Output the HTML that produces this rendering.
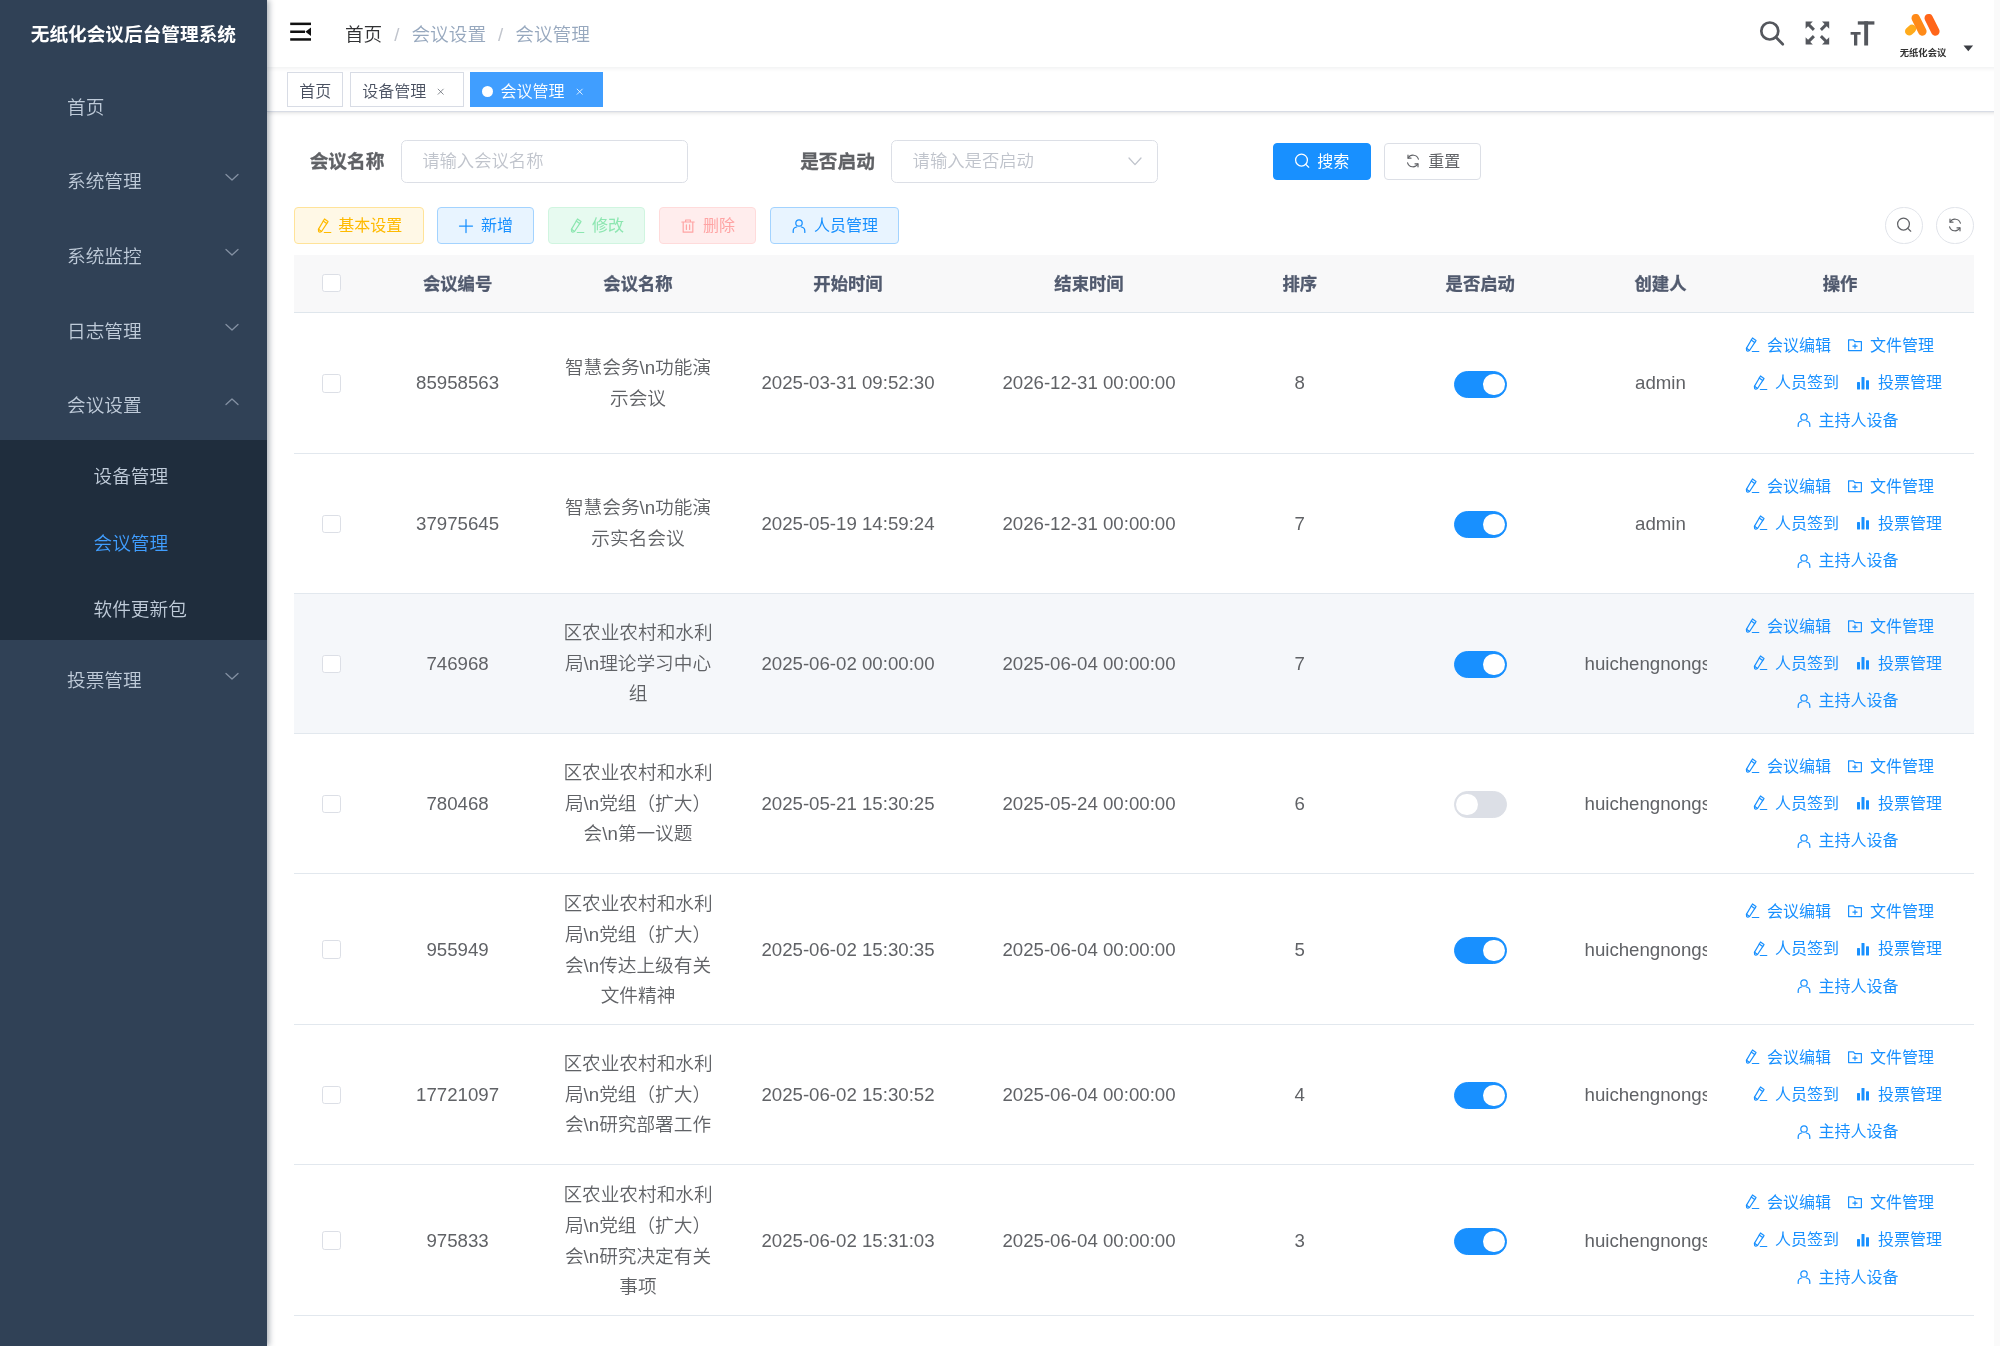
<!DOCTYPE html>
<html lang="zh-CN"><head><meta charset="utf-8"><title>无纸化会议后台管理系统</title>
<style>
*{box-sizing:border-box;margin:0;padding:0}
html,body{width:2000px;height:1346px;overflow:hidden;background:#fff}
body{font-family:"Liberation Sans","Noto Sans CJK SC",sans-serif;font-size:18.67px;color:#606266;position:relative;font-weight:350;-webkit-font-smoothing:antialiased}
svg{display:block;overflow:visible}
.abs{position:absolute}
/* sidebar */
.sidebar{position:absolute;left:0;top:0;width:266.67px;height:1346px;background:#304156;box-shadow:2px 0 6px rgba(0,21,41,.35);z-index:10}
.logo{height:66.67px;line-height:70px;text-align:center;color:#fff;font-weight:700;font-size:18.67px;white-space:nowrap}
.mi{position:relative;height:74.67px;line-height:81px;padding-left:67px;color:#bfcbd9;font-size:18.67px;white-space:nowrap}
.mi svg{position:absolute;left:224px;top:28px}
.sub{background:#1f2d3d}
.sub .si{height:66.67px;line-height:73px;padding-left:93.5px;color:#bfcbd9;font-size:18.67px;white-space:nowrap}
.sub .si.on{color:#409eff}
/* navbar */
.navbar{position:absolute;left:266.67px;top:0;width:1733.33px;height:66.67px;background:#fff;box-shadow:0 1px 5px rgba(0,21,41,.08);z-index:5}
.bc{position:absolute;left:78.3px;top:0;height:66.67px;line-height:69.2px;font-size:18.67px;white-space:nowrap;color:#97a8be}
.bc b{font-weight:350;color:#303133}
.bc i{font-style:normal;color:#c0c4cc;margin:0 12px}
/* tags */
.tags{position:absolute;left:266.67px;top:66.67px;width:1733.33px;height:45.33px;background:#fff;border-bottom:1px solid #d8dce5;box-shadow:0 1px 4px 0 rgba(0,0,0,.12),0 0 3px 0 rgba(0,0,0,.04);z-index:4}
.tag{position:absolute;top:5.33px;height:34.67px;line-height:37.6px;border:1px solid #d8dce5;background:#fff;color:#495060;font-size:16px;padding-left:10.7px;white-space:nowrap}
.tag.on{background:#409eff;border-color:#409eff;color:#fff}
.tag .dot{display:inline-block;width:11px;height:11px;border-radius:50%;background:#fff;margin-right:7.5px;position:relative;top:0.5px}
/* form */
.lbl{-webkit-text-stroke:0.3px #606266;position:absolute;font-weight:700;color:#606266;font-size:18.67px;line-height:43px;height:43px;top:139.5px;white-space:nowrap;text-align:right}
.inp{position:absolute;top:140.2px;height:42.4px;border:1px solid #dcdfe6;border-radius:5.33px;background:#fff;color:#c0c4cc;font-size:17.33px;line-height:40.6px;padding-left:20.2px;white-space:nowrap}
.btn{font-weight:400;position:absolute;height:36.6px;border-radius:4px;font-size:16px;white-space:nowrap;border:1px solid #dcdfe6;background:#fff;color:#606266;display:flex;align-items:center;justify-content:center}
.btn svg{margin-right:6.7px;flex:none}
.btn span{display:block;line-height:20px;position:relative;top:0.7px}
.circ svg{position:relative;top:-0.6px}
.circ{position:absolute;width:37.3px;height:37.3px;border-radius:50%;border:1px solid #e0e3e9;background:#fff;display:flex;align-items:center;justify-content:center}
/* table */
.thead{position:absolute;left:293.5px;top:254.5px;width:1680px;height:58.5px;background:#f8f8f9;border-bottom:1px solid #dfe6ec}
.th{-webkit-text-stroke:0.3px #515a6e;position:absolute;top:0;height:57.5px;line-height:58.5px;text-align:center;font-weight:700;color:#515a6e;font-size:17.33px;white-space:nowrap}
.row{position:absolute;left:293.5px;width:1680px;border-bottom:1px solid #e2e8ee;background:#fff}
.row.hov{background:#f5f7fa}
.td{position:absolute;top:1px;bottom:0;display:flex;align-items:center;justify-content:center;text-align:center;font-size:18.67px;line-height:30.67px;color:#606266;overflow:hidden}
.td .in{white-space:nowrap}
.row.tall .td{top:3px}
.row.tall .sw{top:-0.3px}
.row.tall .cb{top:-1px}
.name{position:relative;top:0;width:153.5px;word-break:break-all;text-align:center}
.cb{width:18.67px;height:18.67px;position:relative;left:1.2px;border:1px solid #dcdfe6;border-radius:2.7px;background:#fff}
.sw{position:relative;top:0.7px;width:53.33px;height:26.67px;border-radius:13.4px;background:#1890ff;border:1px solid #1890ff}
.sw:after{content:"";position:absolute;top:1.67px;left:28.67px;width:21.33px;height:21.33px;border-radius:50%;background:#fff}
.sw.off{background:#dcdfe6;border-color:#dcdfe6}
.sw.off:after{left:1.7px}
.ops{font-weight:400;position:absolute;left:1412.2px;width:266.67px;top:1px;bottom:0;display:flex;flex-direction:column;justify-content:center;align-items:center;color:#1890ff;font-size:16px}
.ol{height:37.4px;display:flex;align-items:center;justify-content:center;white-space:nowrap}
.ob{display:flex;align-items:center;margin-left:16px}
.ob.f{margin-left:0}
.ob svg{margin-right:7px;flex:none;position:relative;top:-0.8px}
.ob span{display:block;line-height:20px}
</style></head>
<body>
<div style="position:absolute;left:0;top:0;width:2000px;height:1346px;will-change:transform">
<div class="sidebar">
<div class="logo">无纸化会议后台管理系统</div>
<div class="mi">首页</div>
<div class="mi">系统管理<svg width="16" height="16" viewBox="0 0 16 16"><path d="M2 5.5 L8 11 L14 5.5" fill="none" stroke="#8491a3" stroke-width="1.3" stroke-linecap="round" stroke-linejoin="round"/></svg></div>
<div class="mi">系统监控<svg width="16" height="16" viewBox="0 0 16 16"><path d="M2 5.5 L8 11 L14 5.5" fill="none" stroke="#8491a3" stroke-width="1.3" stroke-linecap="round" stroke-linejoin="round"/></svg></div>
<div class="mi">日志管理<svg width="16" height="16" viewBox="0 0 16 16"><path d="M2 5.5 L8 11 L14 5.5" fill="none" stroke="#8491a3" stroke-width="1.3" stroke-linecap="round" stroke-linejoin="round"/></svg></div>
<div class="mi">会议设置<svg width="16" height="16" viewBox="0 0 16 16"><path d="M2 11.5 L8 6 L14 11.5" fill="none" stroke="#8491a3" stroke-width="1.3" stroke-linecap="round" stroke-linejoin="round"/></svg></div>
<div class="sub"><div class="si">设备管理</div><div class="si on">会议管理</div><div class="si">软件更新包</div></div>
<div class="mi">投票管理<svg width="16" height="16" viewBox="0 0 16 16"><path d="M2 5.5 L8 11 L14 5.5" fill="none" stroke="#8491a3" stroke-width="1.3" stroke-linecap="round" stroke-linejoin="round"/></svg></div>
</div>
<div class="navbar">
<svg class="abs" style="left:23.33px;top:22.3px" width="22" height="20" viewBox="0 0 22 20"><g fill="#111"><rect x="0.2" y="0.6" width="20.8" height="2.5"/><rect x="0.2" y="8.5" width="14.8" height="2.5"/><rect x="0.2" y="16.2" width="20.8" height="2.5"/><path d="M21 5.4 L21 14 L15.4 9.7 Z"/></g></svg>
<div class="bc"><b>首页</b><i>/</i>会议设置<i>/</i>会议管理</div>
<svg class="abs" style="left:1491.33px;top:19px" width="28" height="28" viewBox="0 0 28 28" fill="none" stroke="#54575d" stroke-width="2.7" stroke-linecap="round"><circle cx="11.8" cy="12" r="8.5"/><path d="M18.2 18.5 L24.8 25.2"/></svg>
<svg class="abs" style="left:1538.13px;top:21.4px" width="25" height="24" viewBox="0 0 25 24" fill="#54575d"><g><path d="M0.6 0.6 H7.8 L0.6 7.8 Z"/><path d="M3.4 3.4 L8.9 8.9" stroke="#54575d" stroke-width="2.9" stroke-linecap="butt" fill="none"/></g><g transform="translate(24.8,0) scale(-1,1)"><path d="M0.6 0.6 H7.8 L0.6 7.8 Z"/><path d="M3.4 3.4 L8.9 8.9" stroke="#54575d" stroke-width="2.9" stroke-linecap="butt" fill="none"/></g><g transform="translate(0,24) scale(1,-1)"><path d="M0.6 0.6 H7.8 L0.6 7.8 Z"/><path d="M3.4 3.4 L8.9 8.9" stroke="#54575d" stroke-width="2.9" stroke-linecap="butt" fill="none"/></g><g transform="translate(24.8,24) scale(-1,-1)"><path d="M0.6 0.6 H7.8 L0.6 7.8 Z"/><path d="M3.4 3.4 L8.9 8.9" stroke="#54575d" stroke-width="2.9" stroke-linecap="butt" fill="none"/></g></svg>
<svg class="abs" style="left:1583.33px;top:21px" width="25" height="25" viewBox="0 0 25 25" fill="#54575d"><rect x="7.8" y="0.3" width="16.6" height="3.3"/><rect x="14.2" y="0.3" width="3.9" height="24.2"/><rect x="0.6" y="11" width="10" height="2.7"/><rect x="4" y="11" width="3.3" height="13.5"/></svg>
<svg class="abs" style="left:1633.33px;top:12px" width="46" height="28" viewBox="0 0 46 28" fill="none" stroke-linecap="round" stroke-width="8.4"><path d="M9.2 19.3 L12 16.8" stroke="#ffab1c"/><path d="M15.7 6.1 L22.4 19.5" stroke="#ff8a18"/><path d="M28.7 6.1 L35.4 19.5" stroke="#ff6519"/></svg>
<div class="abs" style="left:1623.33px;top:46px;width:66px;text-align:center;font-size:9.3px;line-height:14px;font-weight:700;color:#333;white-space:nowrap">无纸化会议</div>
<svg class="abs" style="left:1696.33px;top:44.6px" width="11" height="7" viewBox="0 0 11 7"><path d="M0.5 0.5 H10.1 L5.3 6.2 Z" fill="#3b3e44"/></svg>
</div>
<div class="tags">
<div class="tag" style="left:20.83px;width:55.4px">首页</div>
<div class="tag" style="left:83.83px;width:113.4px">设备管理<span class="abs" style="left:85.7px;top:14.8px"><svg width="7.4" height="7.4" viewBox="0 0 10 10" fill="none" stroke="#6b7079" stroke-width="1.1" stroke-linecap="round"><path d="M1.5 1.5 L8.5 8.5 M8.5 1.5 L1.5 8.5"/></svg></span></div>
<div class="tag on" style="left:203.63px;width:132.3px"><span class="dot"></span>会议管理<span class="abs" style="left:105.2px;top:14.8px"><svg width="7.4" height="7.4" viewBox="0 0 10 10" fill="none" stroke="#fff" stroke-width="1.1" stroke-linecap="round"><path d="M1.5 1.5 L8.5 8.5 M8.5 1.5 L1.5 8.5"/></svg></span></div>
</div>
<div class="lbl" style="left:284.3px;width:100px">会议名称</div>
<div class="inp" style="left:401px;width:286.7px">请输入会议名称</div>
<div class="lbl" style="left:774.8px;width:100px">是否启动</div>
<div class="inp" style="left:891.4px;width:266.7px">请输入是否启动<svg class="abs" style="left:235px;top:12.4px" width="16" height="16" viewBox="0 0 16 16"><path d="M2 4 L8 10.6 L14 4" fill="none" stroke="#c0c4cc" stroke-width="1.3" stroke-linecap="round" stroke-linejoin="round"/></svg></div>
<div class="btn" style="left:1273px;top:143px;width:97.7px;background:#1890ff;border-color:#1890ff;color:#fff"><svg width="16" height="16" viewBox="0 0 16 16" fill="none" stroke="#fff" stroke-width="1.25" stroke-linecap="round"><circle cx="7.5" cy="7.1" r="5.9"/><path d="M11.8 11.4 L14.7 14.2"/></svg><span>搜索</span></div>
<div class="btn" style="left:1384.3px;top:143px;width:97.1px"><svg width="16" height="16" viewBox="0 0 16 16" fill="none" stroke="#606266" stroke-width="1.2" stroke-linecap="round" stroke-linejoin="round"><path d="M13.4 6.2 A5.6 5.6 0 0 0 3.2 5 M2.6 9.8 A5.6 5.6 0 0 0 12.8 11"/><path d="M3 2.2 V5.2 H6 M13 13.8 V10.8 H10"/></svg><span>重置</span></div>
<div class="btn" style="left:294px;top:207.3px;width:129.9px;background:#fff8e6;border-color:#ffe399;color:#ffba00"><svg width="16" height="16" viewBox="0 0 16 16" fill="none" stroke="#ffba00" stroke-width="1.2" stroke-linecap="round" stroke-linejoin="round"><path d="M8.5 1 L12 3.6 L5.5 13.5 Q3.7 14.7 2.7 13.6 L2.4 11.4 Z"/><path d="M7.2 3 L10.7 5.6"/><path d="M2.6 11.2 L5.5 13.4"/><path d="M8.3 14.5 L14.8 14.5"/></svg><span>基本设置</span></div>
<div class="btn" style="left:437.2px;top:207.3px;width:97.1px;background:#e8f4ff;border-color:#a3d3ff;color:#1890ff"><svg width="16" height="16" viewBox="0 0 16 16" fill="none" stroke="#1890ff" stroke-width="1.25" stroke-linecap="round"><path d="M8 1.5 V14.5 M1.5 8 H14.5"/></svg><span>新增</span></div>
<div class="btn" style="left:548.2px;top:207.3px;width:96.9px;background:#e7faf0;border-color:#d0f5e0;color:#8ce6b0"><svg width="16" height="16" viewBox="0 0 16 16" fill="none" stroke="#8ce6b0" stroke-width="1.2" stroke-linecap="round" stroke-linejoin="round"><path d="M8.5 1 L12 3.6 L5.5 13.5 Q3.7 14.7 2.7 13.6 L2.4 11.4 Z"/><path d="M7.2 3 L10.7 5.6"/><path d="M2.6 11.2 L5.5 13.4"/><path d="M8.3 14.5 L14.8 14.5"/></svg><span>修改</span></div>
<div class="btn" style="left:659px;top:207.3px;width:97.3px;background:#ffeded;border-color:#ffdbdb;color:#ffa4a4"><svg width="16" height="16" viewBox="0 0 16 16" fill="none" stroke="#ffa4a4" stroke-width="1.2" stroke-linecap="round" stroke-linejoin="round"><path d="M1.8 4 H14.2 M5.6 4 V2 H10.4 V4 M3.2 4 V14.2 H12.8 V4 M6.4 6.8 V11.4 M9.6 6.8 V11.4"/></svg><span>删除</span></div>
<div class="btn" style="left:770px;top:207.3px;width:129.1px;background:#e8f4ff;border-color:#a3d3ff;color:#1890ff"><svg width="16" height="16" viewBox="0 0 16 16" fill="none" stroke="#1890ff" stroke-width="1.25" stroke-linecap="round" stroke-linejoin="round"><circle cx="8" cy="5" r="3.2"/><path d="M2.2 14.4 V13 C2.2 10.6 4 9.3 5.6 9 M13.8 14.4 V13 C13.8 10.6 12 9.3 10.4 9"/></svg><span>人员管理</span></div>
<div class="circ" style="left:1885.4px;top:206.9px"><svg width="16" height="16" viewBox="0 0 16 16" fill="none" stroke="#606266" stroke-width="1.25" stroke-linecap="round"><circle cx="7.5" cy="7.1" r="5.9"/><path d="M11.8 11.4 L14.7 14.2"/></svg></div>
<div class="circ" style="left:1936.3px;top:206.9px"><svg width="16" height="16" viewBox="0 0 16 16" fill="none" stroke="#606266" stroke-width="1.2" stroke-linecap="round" stroke-linejoin="round"><path d="M13.4 6.2 A5.6 5.6 0 0 0 3.2 5 M2.6 9.8 A5.6 5.6 0 0 0 12.8 11"/><path d="M3 2.2 V5.2 H6 M13 13.8 V10.8 H10"/></svg></div>
<div class="thead"><div class="td" style="left:0;top:0;width:73.7px;height:57px"><div class="cb"></div></div><div class="th" style="left:73.7px;width:180.8px">会议编号</div><div class="th" style="left:254.5px;width:180.0px">会议名称</div><div class="th" style="left:434.5px;width:240.0px">开始时间</div><div class="th" style="left:674.5px;width:242.0px">结束时间</div><div class="th" style="left:916.5px;width:179.5px">排序</div><div class="th" style="left:1096px;width:181.5px">是否启动</div><div class="th" style="left:1277.5px;width:179.0px">创建人</div><div class="th" style="left:1413.2px;width:266.8px;background:#f8f8f9">操作</div></div>
<div class="row" style="top:313px;height:141px"><div class="td" style="left:0px;width:73.7px"><div class="cb"></div></div><div class="td" style="left:73.7px;width:180.8px"><div class="in">85958563</div></div><div class="td" style="left:254.5px;width:180.0px"><div class="name">智慧会务\n功能演示会议</div></div><div class="td" style="left:434.5px;width:240.0px"><div class="in">2025-03-31 09:52:30</div></div><div class="td" style="left:674.5px;width:242.0px"><div class="in">2026-12-31 00:00:00</div></div><div class="td" style="left:916.5px;width:179.5px"><div class="in">8</div></div><div class="td" style="left:1096px;width:181.5px"><div class="sw"></div></div><div class="td" style="left:1277.5px;width:135.70000000000005px"><div class="in" style="position:absolute;left:0;width:179.0px;text-align:center">admin</div></div><div class="ops"><div class="ol"><div class="ob f"><svg width="16" height="16" viewBox="0 0 16 16" fill="none" stroke="#1890ff" stroke-width="1.2" stroke-linecap="round" stroke-linejoin="round"><path d="M8.5 1 L12 3.6 L5.5 13.5 Q3.7 14.7 2.7 13.6 L2.4 11.4 Z"/><path d="M7.2 3 L10.7 5.6"/><path d="M2.6 11.2 L5.5 13.4"/><path d="M8.3 14.5 L14.8 14.5"/></svg><span>会议编辑</span></div><div class="ob"><svg width="16" height="16" viewBox="0 0 16 16" fill="none" stroke="#1890ff" stroke-width="1.2" stroke-linecap="round" stroke-linejoin="round"><path d="M1.6 2.8 H6.4 L7.8 4.6 H14.4 V13.6 H1.6 Z M8 7 V11.2 M5.9 9.1 H10.1"/></svg><span>文件管理</span></div></div><div class="ol"><div class="ob"><svg width="16" height="16" viewBox="0 0 16 16" fill="none" stroke="#1890ff" stroke-width="1.2" stroke-linecap="round" stroke-linejoin="round"><path d="M8.5 1 L12 3.6 L5.5 13.5 Q3.7 14.7 2.7 13.6 L2.4 11.4 Z"/><path d="M7.2 3 L10.7 5.6"/><path d="M2.6 11.2 L5.5 13.4"/><path d="M8.3 14.5 L14.8 14.5"/></svg><span>人员签到</span></div><div class="ob"><svg width="16" height="16" viewBox="0 0 16 16" fill="#1890ff"><rect x="2" y="7" width="3" height="7.5" rx=".6"/><rect x="6.5" y="2" width="3" height="12.5" rx=".6"/><rect x="11" y="5.2" width="3" height="9.3" rx=".6"/></svg><span>投票管理</span></div></div><div class="ol"><div class="ob"><svg width="16" height="16" viewBox="0 0 16 16" fill="none" stroke="#1890ff" stroke-width="1.25" stroke-linecap="round" stroke-linejoin="round"><circle cx="8" cy="5" r="3.2"/><path d="M2.2 14.4 V13 C2.2 10.6 4 9.3 5.6 9 M13.8 14.4 V13 C13.8 10.6 12 9.3 10.4 9"/></svg><span>主持人设备</span></div></div></div></div>
<div class="row" style="top:454px;height:140px"><div class="td" style="left:0px;width:73.7px"><div class="cb"></div></div><div class="td" style="left:73.7px;width:180.8px"><div class="in">37975645</div></div><div class="td" style="left:254.5px;width:180.0px"><div class="name">智慧会务\n功能演示实名会议</div></div><div class="td" style="left:434.5px;width:240.0px"><div class="in">2025-05-19 14:59:24</div></div><div class="td" style="left:674.5px;width:242.0px"><div class="in">2026-12-31 00:00:00</div></div><div class="td" style="left:916.5px;width:179.5px"><div class="in">7</div></div><div class="td" style="left:1096px;width:181.5px"><div class="sw"></div></div><div class="td" style="left:1277.5px;width:135.70000000000005px"><div class="in" style="position:absolute;left:0;width:179.0px;text-align:center">admin</div></div><div class="ops"><div class="ol"><div class="ob f"><svg width="16" height="16" viewBox="0 0 16 16" fill="none" stroke="#1890ff" stroke-width="1.2" stroke-linecap="round" stroke-linejoin="round"><path d="M8.5 1 L12 3.6 L5.5 13.5 Q3.7 14.7 2.7 13.6 L2.4 11.4 Z"/><path d="M7.2 3 L10.7 5.6"/><path d="M2.6 11.2 L5.5 13.4"/><path d="M8.3 14.5 L14.8 14.5"/></svg><span>会议编辑</span></div><div class="ob"><svg width="16" height="16" viewBox="0 0 16 16" fill="none" stroke="#1890ff" stroke-width="1.2" stroke-linecap="round" stroke-linejoin="round"><path d="M1.6 2.8 H6.4 L7.8 4.6 H14.4 V13.6 H1.6 Z M8 7 V11.2 M5.9 9.1 H10.1"/></svg><span>文件管理</span></div></div><div class="ol"><div class="ob"><svg width="16" height="16" viewBox="0 0 16 16" fill="none" stroke="#1890ff" stroke-width="1.2" stroke-linecap="round" stroke-linejoin="round"><path d="M8.5 1 L12 3.6 L5.5 13.5 Q3.7 14.7 2.7 13.6 L2.4 11.4 Z"/><path d="M7.2 3 L10.7 5.6"/><path d="M2.6 11.2 L5.5 13.4"/><path d="M8.3 14.5 L14.8 14.5"/></svg><span>人员签到</span></div><div class="ob"><svg width="16" height="16" viewBox="0 0 16 16" fill="#1890ff"><rect x="2" y="7" width="3" height="7.5" rx=".6"/><rect x="6.5" y="2" width="3" height="12.5" rx=".6"/><rect x="11" y="5.2" width="3" height="9.3" rx=".6"/></svg><span>投票管理</span></div></div><div class="ol"><div class="ob"><svg width="16" height="16" viewBox="0 0 16 16" fill="none" stroke="#1890ff" stroke-width="1.25" stroke-linecap="round" stroke-linejoin="round"><circle cx="8" cy="5" r="3.2"/><path d="M2.2 14.4 V13 C2.2 10.6 4 9.3 5.6 9 M13.8 14.4 V13 C13.8 10.6 12 9.3 10.4 9"/></svg><span>主持人设备</span></div></div></div></div>
<div class="row hov" style="top:594px;height:140px"><div class="td" style="left:0px;width:73.7px"><div class="cb"></div></div><div class="td" style="left:73.7px;width:180.8px"><div class="in">746968</div></div><div class="td" style="left:254.5px;width:180.0px"><div class="name">区农业农村和水利局\n理论学习中心组</div></div><div class="td" style="left:434.5px;width:240.0px"><div class="in">2025-06-02 00:00:00</div></div><div class="td" style="left:674.5px;width:242.0px"><div class="in">2025-06-04 00:00:00</div></div><div class="td" style="left:916.5px;width:179.5px"><div class="in">7</div></div><div class="td" style="left:1096px;width:181.5px"><div class="sw"></div></div><div class="td" style="left:1277.5px;width:135.70000000000005px"><div class="in" style="position:absolute;left:13.5px">huichengnongshuiju</div></div><div class="ops"><div class="ol"><div class="ob f"><svg width="16" height="16" viewBox="0 0 16 16" fill="none" stroke="#1890ff" stroke-width="1.2" stroke-linecap="round" stroke-linejoin="round"><path d="M8.5 1 L12 3.6 L5.5 13.5 Q3.7 14.7 2.7 13.6 L2.4 11.4 Z"/><path d="M7.2 3 L10.7 5.6"/><path d="M2.6 11.2 L5.5 13.4"/><path d="M8.3 14.5 L14.8 14.5"/></svg><span>会议编辑</span></div><div class="ob"><svg width="16" height="16" viewBox="0 0 16 16" fill="none" stroke="#1890ff" stroke-width="1.2" stroke-linecap="round" stroke-linejoin="round"><path d="M1.6 2.8 H6.4 L7.8 4.6 H14.4 V13.6 H1.6 Z M8 7 V11.2 M5.9 9.1 H10.1"/></svg><span>文件管理</span></div></div><div class="ol"><div class="ob"><svg width="16" height="16" viewBox="0 0 16 16" fill="none" stroke="#1890ff" stroke-width="1.2" stroke-linecap="round" stroke-linejoin="round"><path d="M8.5 1 L12 3.6 L5.5 13.5 Q3.7 14.7 2.7 13.6 L2.4 11.4 Z"/><path d="M7.2 3 L10.7 5.6"/><path d="M2.6 11.2 L5.5 13.4"/><path d="M8.3 14.5 L14.8 14.5"/></svg><span>人员签到</span></div><div class="ob"><svg width="16" height="16" viewBox="0 0 16 16" fill="#1890ff"><rect x="2" y="7" width="3" height="7.5" rx=".6"/><rect x="6.5" y="2" width="3" height="12.5" rx=".6"/><rect x="11" y="5.2" width="3" height="9.3" rx=".6"/></svg><span>投票管理</span></div></div><div class="ol"><div class="ob"><svg width="16" height="16" viewBox="0 0 16 16" fill="none" stroke="#1890ff" stroke-width="1.25" stroke-linecap="round" stroke-linejoin="round"><circle cx="8" cy="5" r="3.2"/><path d="M2.2 14.4 V13 C2.2 10.6 4 9.3 5.6 9 M13.8 14.4 V13 C13.8 10.6 12 9.3 10.4 9"/></svg><span>主持人设备</span></div></div></div></div>
<div class="row" style="top:734px;height:140px"><div class="td" style="left:0px;width:73.7px"><div class="cb"></div></div><div class="td" style="left:73.7px;width:180.8px"><div class="in">780468</div></div><div class="td" style="left:254.5px;width:180.0px"><div class="name">区农业农村和水利局\n党组（扩大）会\n第一议题</div></div><div class="td" style="left:434.5px;width:240.0px"><div class="in">2025-05-21 15:30:25</div></div><div class="td" style="left:674.5px;width:242.0px"><div class="in">2025-05-24 00:00:00</div></div><div class="td" style="left:916.5px;width:179.5px"><div class="in">6</div></div><div class="td" style="left:1096px;width:181.5px"><div class="sw off"></div></div><div class="td" style="left:1277.5px;width:135.70000000000005px"><div class="in" style="position:absolute;left:13.5px">huichengnongshuiju</div></div><div class="ops"><div class="ol"><div class="ob f"><svg width="16" height="16" viewBox="0 0 16 16" fill="none" stroke="#1890ff" stroke-width="1.2" stroke-linecap="round" stroke-linejoin="round"><path d="M8.5 1 L12 3.6 L5.5 13.5 Q3.7 14.7 2.7 13.6 L2.4 11.4 Z"/><path d="M7.2 3 L10.7 5.6"/><path d="M2.6 11.2 L5.5 13.4"/><path d="M8.3 14.5 L14.8 14.5"/></svg><span>会议编辑</span></div><div class="ob"><svg width="16" height="16" viewBox="0 0 16 16" fill="none" stroke="#1890ff" stroke-width="1.2" stroke-linecap="round" stroke-linejoin="round"><path d="M1.6 2.8 H6.4 L7.8 4.6 H14.4 V13.6 H1.6 Z M8 7 V11.2 M5.9 9.1 H10.1"/></svg><span>文件管理</span></div></div><div class="ol"><div class="ob"><svg width="16" height="16" viewBox="0 0 16 16" fill="none" stroke="#1890ff" stroke-width="1.2" stroke-linecap="round" stroke-linejoin="round"><path d="M8.5 1 L12 3.6 L5.5 13.5 Q3.7 14.7 2.7 13.6 L2.4 11.4 Z"/><path d="M7.2 3 L10.7 5.6"/><path d="M2.6 11.2 L5.5 13.4"/><path d="M8.3 14.5 L14.8 14.5"/></svg><span>人员签到</span></div><div class="ob"><svg width="16" height="16" viewBox="0 0 16 16" fill="#1890ff"><rect x="2" y="7" width="3" height="7.5" rx=".6"/><rect x="6.5" y="2" width="3" height="12.5" rx=".6"/><rect x="11" y="5.2" width="3" height="9.3" rx=".6"/></svg><span>投票管理</span></div></div><div class="ol"><div class="ob"><svg width="16" height="16" viewBox="0 0 16 16" fill="none" stroke="#1890ff" stroke-width="1.25" stroke-linecap="round" stroke-linejoin="round"><circle cx="8" cy="5" r="3.2"/><path d="M2.2 14.4 V13 C2.2 10.6 4 9.3 5.6 9 M13.8 14.4 V13 C13.8 10.6 12 9.3 10.4 9"/></svg><span>主持人设备</span></div></div></div></div>
<div class="row tall" style="top:874px;height:151px"><div class="td" style="left:0px;width:73.7px"><div class="cb"></div></div><div class="td" style="left:73.7px;width:180.8px"><div class="in">955949</div></div><div class="td" style="left:254.5px;width:180.0px"><div class="name">区农业农村和水利局\n党组（扩大）会\n传达上级有关文件精神</div></div><div class="td" style="left:434.5px;width:240.0px"><div class="in">2025-06-02 15:30:35</div></div><div class="td" style="left:674.5px;width:242.0px"><div class="in">2025-06-04 00:00:00</div></div><div class="td" style="left:916.5px;width:179.5px"><div class="in">5</div></div><div class="td" style="left:1096px;width:181.5px"><div class="sw"></div></div><div class="td" style="left:1277.5px;width:135.70000000000005px"><div class="in" style="position:absolute;left:13.5px">huichengnongshuiju</div></div><div class="ops"><div class="ol"><div class="ob f"><svg width="16" height="16" viewBox="0 0 16 16" fill="none" stroke="#1890ff" stroke-width="1.2" stroke-linecap="round" stroke-linejoin="round"><path d="M8.5 1 L12 3.6 L5.5 13.5 Q3.7 14.7 2.7 13.6 L2.4 11.4 Z"/><path d="M7.2 3 L10.7 5.6"/><path d="M2.6 11.2 L5.5 13.4"/><path d="M8.3 14.5 L14.8 14.5"/></svg><span>会议编辑</span></div><div class="ob"><svg width="16" height="16" viewBox="0 0 16 16" fill="none" stroke="#1890ff" stroke-width="1.2" stroke-linecap="round" stroke-linejoin="round"><path d="M1.6 2.8 H6.4 L7.8 4.6 H14.4 V13.6 H1.6 Z M8 7 V11.2 M5.9 9.1 H10.1"/></svg><span>文件管理</span></div></div><div class="ol"><div class="ob"><svg width="16" height="16" viewBox="0 0 16 16" fill="none" stroke="#1890ff" stroke-width="1.2" stroke-linecap="round" stroke-linejoin="round"><path d="M8.5 1 L12 3.6 L5.5 13.5 Q3.7 14.7 2.7 13.6 L2.4 11.4 Z"/><path d="M7.2 3 L10.7 5.6"/><path d="M2.6 11.2 L5.5 13.4"/><path d="M8.3 14.5 L14.8 14.5"/></svg><span>人员签到</span></div><div class="ob"><svg width="16" height="16" viewBox="0 0 16 16" fill="#1890ff"><rect x="2" y="7" width="3" height="7.5" rx=".6"/><rect x="6.5" y="2" width="3" height="12.5" rx=".6"/><rect x="11" y="5.2" width="3" height="9.3" rx=".6"/></svg><span>投票管理</span></div></div><div class="ol"><div class="ob"><svg width="16" height="16" viewBox="0 0 16 16" fill="none" stroke="#1890ff" stroke-width="1.25" stroke-linecap="round" stroke-linejoin="round"><circle cx="8" cy="5" r="3.2"/><path d="M2.2 14.4 V13 C2.2 10.6 4 9.3 5.6 9 M13.8 14.4 V13 C13.8 10.6 12 9.3 10.4 9"/></svg><span>主持人设备</span></div></div></div></div>
<div class="row" style="top:1025px;height:140px"><div class="td" style="left:0px;width:73.7px"><div class="cb"></div></div><div class="td" style="left:73.7px;width:180.8px"><div class="in">17721097</div></div><div class="td" style="left:254.5px;width:180.0px"><div class="name">区农业农村和水利局\n党组（扩大）会\n研究部署工作</div></div><div class="td" style="left:434.5px;width:240.0px"><div class="in">2025-06-02 15:30:52</div></div><div class="td" style="left:674.5px;width:242.0px"><div class="in">2025-06-04 00:00:00</div></div><div class="td" style="left:916.5px;width:179.5px"><div class="in">4</div></div><div class="td" style="left:1096px;width:181.5px"><div class="sw"></div></div><div class="td" style="left:1277.5px;width:135.70000000000005px"><div class="in" style="position:absolute;left:13.5px">huichengnongshuiju</div></div><div class="ops"><div class="ol"><div class="ob f"><svg width="16" height="16" viewBox="0 0 16 16" fill="none" stroke="#1890ff" stroke-width="1.2" stroke-linecap="round" stroke-linejoin="round"><path d="M8.5 1 L12 3.6 L5.5 13.5 Q3.7 14.7 2.7 13.6 L2.4 11.4 Z"/><path d="M7.2 3 L10.7 5.6"/><path d="M2.6 11.2 L5.5 13.4"/><path d="M8.3 14.5 L14.8 14.5"/></svg><span>会议编辑</span></div><div class="ob"><svg width="16" height="16" viewBox="0 0 16 16" fill="none" stroke="#1890ff" stroke-width="1.2" stroke-linecap="round" stroke-linejoin="round"><path d="M1.6 2.8 H6.4 L7.8 4.6 H14.4 V13.6 H1.6 Z M8 7 V11.2 M5.9 9.1 H10.1"/></svg><span>文件管理</span></div></div><div class="ol"><div class="ob"><svg width="16" height="16" viewBox="0 0 16 16" fill="none" stroke="#1890ff" stroke-width="1.2" stroke-linecap="round" stroke-linejoin="round"><path d="M8.5 1 L12 3.6 L5.5 13.5 Q3.7 14.7 2.7 13.6 L2.4 11.4 Z"/><path d="M7.2 3 L10.7 5.6"/><path d="M2.6 11.2 L5.5 13.4"/><path d="M8.3 14.5 L14.8 14.5"/></svg><span>人员签到</span></div><div class="ob"><svg width="16" height="16" viewBox="0 0 16 16" fill="#1890ff"><rect x="2" y="7" width="3" height="7.5" rx=".6"/><rect x="6.5" y="2" width="3" height="12.5" rx=".6"/><rect x="11" y="5.2" width="3" height="9.3" rx=".6"/></svg><span>投票管理</span></div></div><div class="ol"><div class="ob"><svg width="16" height="16" viewBox="0 0 16 16" fill="none" stroke="#1890ff" stroke-width="1.25" stroke-linecap="round" stroke-linejoin="round"><circle cx="8" cy="5" r="3.2"/><path d="M2.2 14.4 V13 C2.2 10.6 4 9.3 5.6 9 M13.8 14.4 V13 C13.8 10.6 12 9.3 10.4 9"/></svg><span>主持人设备</span></div></div></div></div>
<div class="row tall" style="top:1165px;height:151px"><div class="td" style="left:0px;width:73.7px"><div class="cb"></div></div><div class="td" style="left:73.7px;width:180.8px"><div class="in">975833</div></div><div class="td" style="left:254.5px;width:180.0px"><div class="name">区农业农村和水利局\n党组（扩大）会\n研究决定有关事项</div></div><div class="td" style="left:434.5px;width:240.0px"><div class="in">2025-06-02 15:31:03</div></div><div class="td" style="left:674.5px;width:242.0px"><div class="in">2025-06-04 00:00:00</div></div><div class="td" style="left:916.5px;width:179.5px"><div class="in">3</div></div><div class="td" style="left:1096px;width:181.5px"><div class="sw"></div></div><div class="td" style="left:1277.5px;width:135.70000000000005px"><div class="in" style="position:absolute;left:13.5px">huichengnongshuiju</div></div><div class="ops"><div class="ol"><div class="ob f"><svg width="16" height="16" viewBox="0 0 16 16" fill="none" stroke="#1890ff" stroke-width="1.2" stroke-linecap="round" stroke-linejoin="round"><path d="M8.5 1 L12 3.6 L5.5 13.5 Q3.7 14.7 2.7 13.6 L2.4 11.4 Z"/><path d="M7.2 3 L10.7 5.6"/><path d="M2.6 11.2 L5.5 13.4"/><path d="M8.3 14.5 L14.8 14.5"/></svg><span>会议编辑</span></div><div class="ob"><svg width="16" height="16" viewBox="0 0 16 16" fill="none" stroke="#1890ff" stroke-width="1.2" stroke-linecap="round" stroke-linejoin="round"><path d="M1.6 2.8 H6.4 L7.8 4.6 H14.4 V13.6 H1.6 Z M8 7 V11.2 M5.9 9.1 H10.1"/></svg><span>文件管理</span></div></div><div class="ol"><div class="ob"><svg width="16" height="16" viewBox="0 0 16 16" fill="none" stroke="#1890ff" stroke-width="1.2" stroke-linecap="round" stroke-linejoin="round"><path d="M8.5 1 L12 3.6 L5.5 13.5 Q3.7 14.7 2.7 13.6 L2.4 11.4 Z"/><path d="M7.2 3 L10.7 5.6"/><path d="M2.6 11.2 L5.5 13.4"/><path d="M8.3 14.5 L14.8 14.5"/></svg><span>人员签到</span></div><div class="ob"><svg width="16" height="16" viewBox="0 0 16 16" fill="#1890ff"><rect x="2" y="7" width="3" height="7.5" rx=".6"/><rect x="6.5" y="2" width="3" height="12.5" rx=".6"/><rect x="11" y="5.2" width="3" height="9.3" rx=".6"/></svg><span>投票管理</span></div></div><div class="ol"><div class="ob"><svg width="16" height="16" viewBox="0 0 16 16" fill="none" stroke="#1890ff" stroke-width="1.25" stroke-linecap="round" stroke-linejoin="round"><circle cx="8" cy="5" r="3.2"/><path d="M2.2 14.4 V13 C2.2 10.6 4 9.3 5.6 9 M13.8 14.4 V13 C13.8 10.6 12 9.3 10.4 9"/></svg><span>主持人设备</span></div></div></div></div>
<div class="abs" style="left:1993.5px;top:0;width:6.5px;height:1346px;background:#fafafa;z-index:20"></div>
</div>
</body></html>
